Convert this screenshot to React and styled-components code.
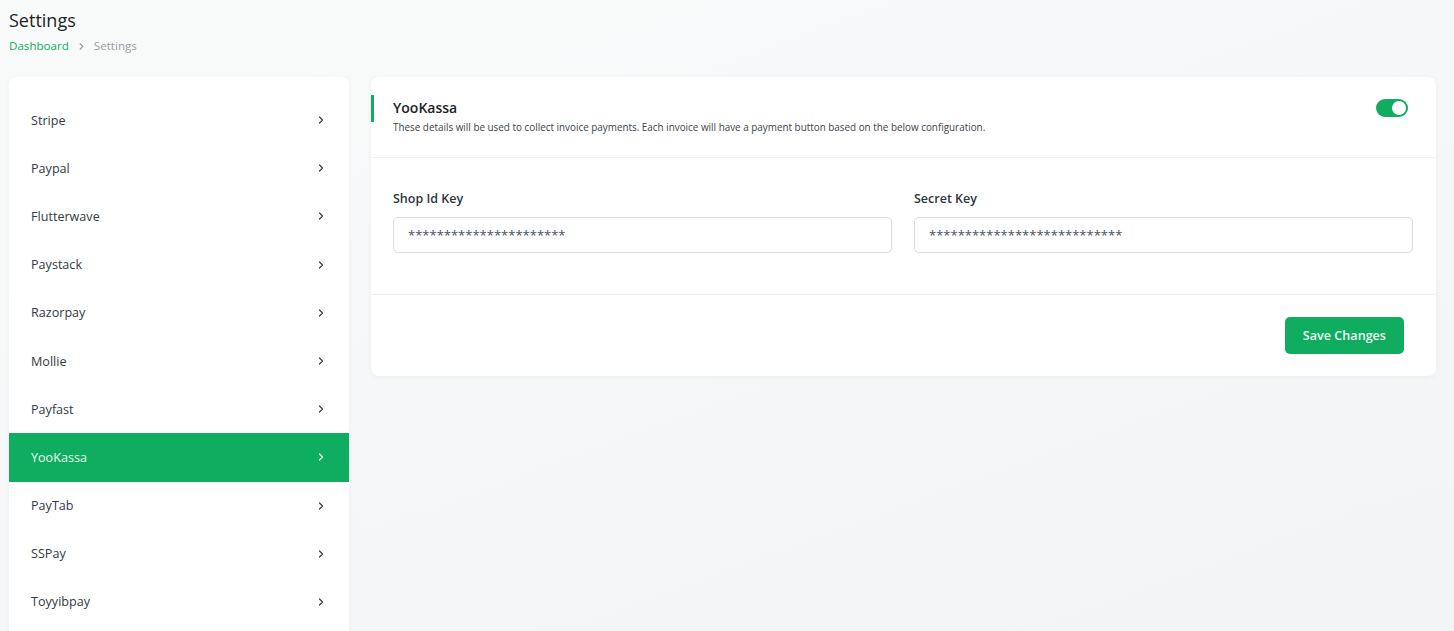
import React, { useState } from "react";
import styled, { createGlobalStyle } from "styled-components";

const GlobalStyle = createGlobalStyle`
  * { box-sizing: border-box; }
  body {
    margin: 0;
    font-family: "Open Sans", "Noto Sans", sans-serif;
    background: linear-gradient(160deg, #f9fafa 0%, #f3f4f6 100%);
    color: #333a44;
  }
`;

const Page = styled.div`
  min-height: 631px;
  padding: 8px 18px 0 9px;
`;

const PageTitle = styled.h1`
  margin: 0;
  font-size: 18px;
  font-weight: 500;
  line-height: 24px;
  color: #1f2328;
`;

const Breadcrumb = styled.div`
  display: flex;
  align-items: center;
  gap: 7px;
  margin-top: 6px;
  font-size: 11.6px;
  line-height: 16px;
`;

const Crumb = styled.span`
  color: ${(p) => (p.active ? "#9a9ea4" : "#10ac5f")};
`;

const Layout = styled.div`
  display: flex;
  align-items: flex-start;
  gap: 22px;
  margin-top: 23px;
`;

const Sidebar = styled.nav`
  width: 340px;
  flex-shrink: 0;
  background: #fff;
  border-radius: 8px 8px 0 0;
  padding: 19px 0 10px;
  box-shadow: 0 1px 6px rgba(20, 30, 50, 0.04);
`;

const NavItem = styled.div`
  display: flex;
  align-items: center;
  justify-content: space-between;
  height: 48.2px;
  padding: 0 22px 0 22px;
  font-size: 12.6px;
  cursor: pointer;
  background: ${(p) => (p.active ? "#0fad5f" : "transparent")};
  color: ${(p) => (p.active ? "#e9fbf1" : "#343a42")};
`;

const Card = styled.section`
  flex: 1;
  background: #fff;
  border-radius: 8px;
  box-shadow: 0 1px 6px rgba(20, 30, 50, 0.04);
`;

const CardHeader = styled.div`
  display: flex;
  align-items: flex-start;
  justify-content: space-between;
  padding: 20px 28px 23px 22px;
  border-bottom: 1px solid #eef0f2;
  position: relative;
  &::before {
    content: "";
    position: absolute;
    left: 0;
    top: 18px;
    width: 3px;
    height: 27px;
    background: #10ac5f;
  }
`;

const HeaderTitle = styled.h2`
  margin: 0;
  font-size: 14px;
  font-weight: 600;
  line-height: 22px;
  color: #1f2328;
`;

const HeaderText = styled.p`
  margin: 1px 0 0;
  font-size: 9.9px;
  line-height: 14px;
  color: #3d434b;
`;

const Toggle = styled.button`
  width: 32px;
  height: 18px;
  margin-top: 2px;
  border: none;
  border-radius: 9px;
  padding: 0;
  position: relative;
  cursor: pointer;
  background: ${(p) => (p.on ? "#10ac5f" : "#cfd3d8")};
  &::after {
    content: "";
    position: absolute;
    top: 2px;
    left: ${(p) => (p.on ? "16px" : "2px")};
    width: 14px;
    height: 14px;
    border-radius: 50%;
    background: #fff;
  }
`;

const FieldGrid = styled.div`
  display: grid;
  grid-template-columns: 1fr 1fr;
  gap: 22px;
  padding: 32px 23px 41px 22px;
  border-bottom: 1px solid #eef0f2;
`;

const Field = styled.div`
  display: flex;
  flex-direction: column;
  gap: 9px;
`;

const Label = styled.label`
  font-size: 12.5px;
  font-weight: 600;
  line-height: 18px;
  color: #2f353d;
`;

const Input = styled.input`
  height: 36px;
  border: 1px solid #d9dde2;
  border-radius: 5px;
  padding: 0 14px;
  font-family: "Open Sans", sans-serif;
  font-size: 13px;
  color: #4a5260;
  letter-spacing: 0;
  outline: none;
`;

const CardFooter = styled.div`
  display: flex;
  justify-content: flex-end;
  padding: 22px 32px 22px;
`;

const SaveButton = styled.button`
  height: 37px;
  padding: 0 18px;
  border: none;
  border-radius: 5px;
  background: #10ac5f;
  color: #eafbf2;
  font-family: "Open Sans", sans-serif;
  font-size: 12.6px;
  font-weight: 600;
  cursor: pointer;
`;

const Chevron = ({ size = 12 }) => (
  <svg width={size} height={size} viewBox="0 0 24 24" fill="none" stroke="currentColor" strokeWidth="2.4" strokeLinecap="round" strokeLinejoin="round">
    <path d="M9 6l6 6-6 6" />
  </svg>
);

const gateways = [
  "Stripe",
  "Paypal",
  "Flutterwave",
  "Paystack",
  "Razorpay",
  "Mollie",
  "Payfast",
  "YooKassa",
  "PayTab",
  "SSPay",
  "Toyyibpay",
];

export default function App() {
  const [active, setActive] = useState("YooKassa");
  const [enabled, setEnabled] = useState(true);

  return (
    <>
      <GlobalStyle />
      <Page>
        <PageTitle>Settings</PageTitle>
        <Breadcrumb>
          <Crumb>Dashboard</Crumb>
          <span style={{ color: "#9a9ea4", display: "flex" }}>
            <Chevron size={11} />
          </span>
          <Crumb active>Settings</Crumb>
        </Breadcrumb>
        <Layout>
          <Sidebar>
            {gateways.map((g) => (
              <NavItem key={g} active={g === active} onClick={() => setActive(g)}>
                <span>{g}</span>
                <Chevron />
              </NavItem>
            ))}
          </Sidebar>
          <Card>
            <CardHeader>
              <div>
                <HeaderTitle>{active}</HeaderTitle>
                <HeaderText>
                  These details will be used to collect invoice payments. Each invoice will have a payment button based on the below configuration.
                </HeaderText>
              </div>
              <Toggle on={enabled} onClick={() => setEnabled(!enabled)} />
            </CardHeader>
            <FieldGrid>
              <Field>
                <Label>Shop Id Key</Label>
                <Input defaultValue="**********************" />
              </Field>
              <Field>
                <Label>Secret Key</Label>
                <Input defaultValue="***************************" />
              </Field>
            </FieldGrid>
            <CardFooter>
              <SaveButton>Save Changes</SaveButton>
            </CardFooter>
          </Card>
        </Layout>
      </Page>
    </>
  );
}
